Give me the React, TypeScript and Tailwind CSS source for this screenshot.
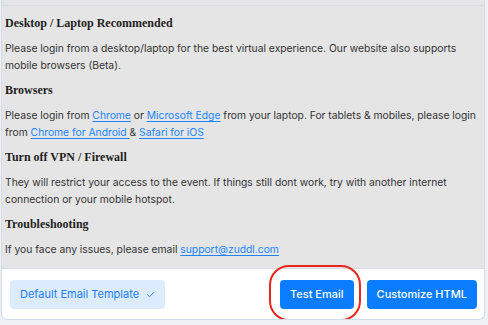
import React from "react";

const linkCls = "text-[#1a85ff] underline underline-offset-2";

function Section({ title, children }: { title: string; children: React.ReactNode }) {
  return (
    <div>
      <h3 className="mb-2 font-['Liberation_Serif',serif] text-[12px] font-bold leading-[17px] text-[#1f1f1f]">
        {title}
      </h3>
      <p className="mb-2 text-[10.3px] leading-[17px] text-[#333]">{children}</p>
    </div>
  );
}

export default function App() {
  return (
    <div className="h-[325px] w-[488px] overflow-hidden bg-[#eef1f6] font-['Inter',sans-serif]">
      <div className="ml-px w-[484px] overflow-hidden rounded-b-[6px] border border-t-0 border-[#d3dbe6] bg-white">
        {/* Info content */}
        <div className="bg-[#e5e5e5] pt-[5px]">
          <div className="h-px bg-[#d9dce1]" />
          <div className="px-[3px] pb-[2px] pt-[9px]">
            <Section title="Desktop / Laptop Recommended">
              Please login from a desktop/laptop for the best virtual experience. Our website also supports
              mobile browsers (Beta).
            </Section>
            <Section title="Browsers">
              Please login from <a className={linkCls}>Chrome</a> or{" "}
              <a className={linkCls}>Microsoft Edge</a> from your laptop. For tablets &amp; mobiles, please login
              from <a className={linkCls}>Chrome for Android </a> &amp; <a className={linkCls}>Safari for iOS</a>
            </Section>
            <Section title="Turn off VPN / Firewall">
              They will restrict your access to the event. If things still dont work, try with another internet
              connection or your mobile hotspot.
            </Section>
            <Section title="Troubleshooting">
              If you face any issues, please email <a className={linkCls}>support@zuddl.com</a>
            </Section>
          </div>
        </div>

        {/* Footer actions */}
        <div className="flex items-center justify-between border-t border-[#d9dde3] pb-[10px] pl-2 pr-[7px] pt-[11px]">
          <button className="flex h-[29px] items-center gap-[7px] rounded-[4px] bg-[#dcebfd] px-[10px] text-[11px] text-[#1a7ff5]">
            Default Email Template
            <svg width="9" height="9" viewBox="0 0 10 10" fill="none">
              <path d="M1.5 5.2L4 7.5L8.5 2.8" stroke="#1a7ff5" strokeWidth="1" strokeLinecap="round" strokeLinejoin="round" />
            </svg>
          </button>
          <div className="flex items-center gap-[13px]">
            <div className="relative">
              <button className="h-[29px] rounded-[4px] bg-[#0a7cff] px-[10px] text-[11px] font-medium text-white">
                Test Email
              </button>
              <div className="pointer-events-none absolute -bottom-[12px] -left-[11px] -right-[7px] -top-[15px] rounded-[20px] border-[2.5px] border-[#e8261c]" />
            </div>
            <button className="h-[29px] rounded-[4px] bg-[#0a7cff] px-[10px] text-[11px] font-medium text-white">
              Customize HTML
            </button>
          </div>
        </div>
      </div>
    </div>
  );
}
